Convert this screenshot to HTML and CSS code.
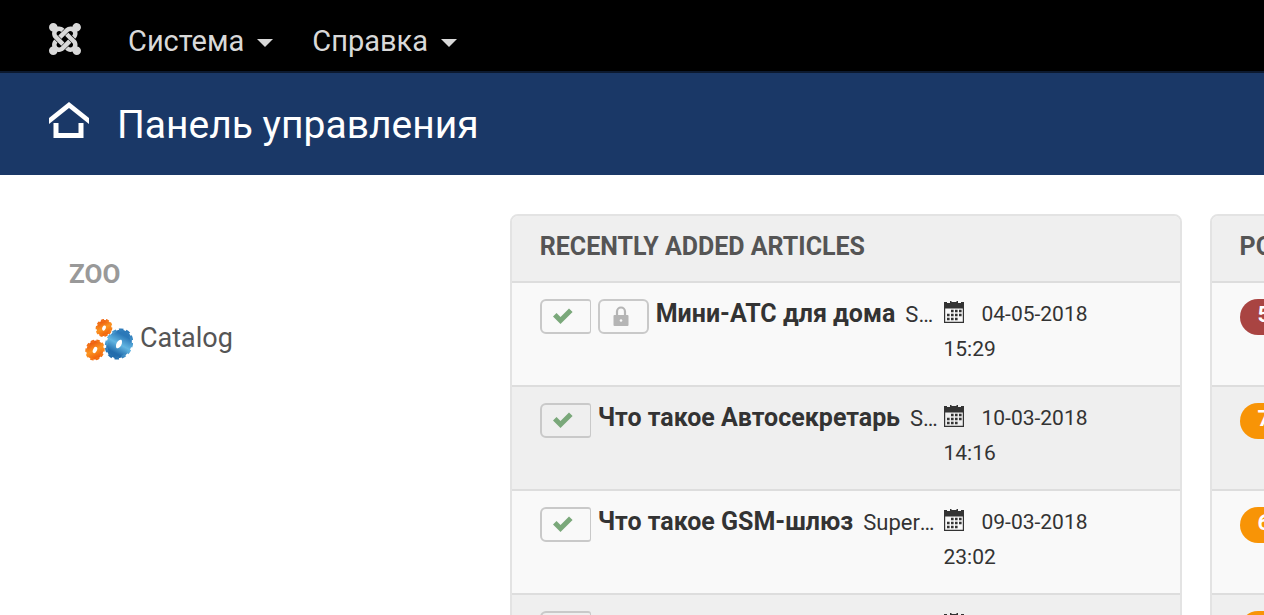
FILE: index.html
```html
<!DOCTYPE html>
<html lang="ru">
<head>
  <meta charset="UTF-8" />
  <meta name="viewport" content="width=device-width, initial-scale=1.0"/>
  <title>Панель управления</title>
  <link rel="stylesheet" href="styles.css">
</head>
<body>

<!-- shared icons -->
<svg class="sprite" aria-hidden="true">
  <symbol id="check" viewBox="0 0 20 16">
    <path d="M0 8.500 3.500 5 7.500 9 16 .4 19.600 4 7.500 16Z" fill="#7aa87a"/>
  </symbol>
  <symbol id="lock" viewBox="0 0 16 20">
    <path d="M4 10V5.500a4 4 0 0 1 8 0V10" fill="none" stroke="#b5b5b5" stroke-width="2.200"/>
    <rect x=".5" y="9" width="15" height="11" rx="1" fill="#b5b5b5"/>
    <circle cx="8" cy="14.500" r="1.300" fill="#f9f9f9"/>
  </symbol>
  <symbol id="calendar" viewBox="0 0 20 22">
    <path d="M0 1h3v1h3V0h1l1 1h4l1-1h1v2h3V1h3v21H0ZM1.200 7.500v13.300h17.600V7.500Z" fill="#333" fill-rule="evenodd"/>
    <path d="M7 10h11M3 14h15M3 18h11" stroke="#333" stroke-width="2.600" stroke-dasharray="2.600 1.400" fill="none"/>
  </symbol>
</svg>

<nav class="navbar">
  <a class="logo" href="#" aria-label="Joomla">
    <svg viewBox="0 32 448 448">
      <path d="M.6 92.1C.6 58.8 27.4 32 60.4 32c30 0 54.5 21.9 59.2 50.200 32.600-7.600 67.100.6 96.500 30l-44.300 44.300c-20.500-20.500-42.600-16.300-55.400-3.500-14.300 14.300-14.300 37.900 0 52.200l99.500 99.500-44 44.300c-87.700-87.200-49.700-49.700-99.800-99.700-26.800-26.500-35-64.800-24.800-98.900C20.400 144.600.6 120.700.6 92.100zm129.500 116.400l44.300 44.300c10-10 89.700-89.700 99.700-99.800 14.300-14.300 37.600-14.300 51.900 0 12.800 12.800 17 35-3.500 55.400l44 44.300c31.200-31.200 38.500-67.600 28.900-101.200 29.200-4.100 51.900-29.200 51.900-59.500 0-33.200-26.800-60.100-59.800-60.100-30.300 0-55.400 22.500-59.500 51.600-33.800-9.900-71.700-1.500-98.300 25.100-18.300 19.100-71.100 71.500-99.600 99.900zm266.300 152.200c8.200-32.700-.9-68.500-26.300-93.900-11.800-12.200 5 4.700-99.500-99.700l-44.300 44.300 99.700 99.700c14.300 14.300 14.300 37.600 0 51.900-12.800 12.800-35 17-55.400-3.500l-44 44.300c27.600 30.200 68 38.800 102.700 28 5.500 27.400 29.700 48.100 58.900 48.100 33 0 59.800-26.800 59.800-60.100 0-30.200-22.500-55-51.600-59.100zm-84.300-53.100l-44-44.300c-87 86.400-50.400 50.400-99.700 99.800-14.300 14.300-37.600 14.300-51.900 0-13.100-13.400-16.900-35.300 3.200-55.400l-44-44.300c-30.200 30.200-38 65.200-29.500 98.300-26.700 6-46.200 29.900-46.200 58.200C0 453.200 26.800 480 59.800 480c28.600 0 52.500-19.800 58.600-46.700 32.700 8.200 68.500-.6 94.200-26 32.100-32 12.200-12.400 99.500-99.700z"/>
    </svg>
  </a>
  <a class="menu" href="#">Система <span class="caret"></span></a>
  <a class="menu" href="#">Справка <span class="caret"></span></a>
</nav>

<header class="header">
  <svg class="home" viewBox="0 0 40 36" fill="#fff">
    <path d="M20 0 40 16v6L20 6 0 22v-6Z"/>
    <path d="M4.500 21h5v10h20V21h5v15h-30Z"/>
  </svg>
  <h1>Панель управления</h1>
</header>

<main class="content">
  <div class="columns">
    <aside class="sidebar">
      <h2>ZOO</h2>
      <a href="#">
        <svg class="gears" viewBox="0 0 48 42">
          <defs>
            <linearGradient id="orange" x1="0" y1="0" x2="1" y2="1">
              <stop offset="0" stop-color="#ec5a10"/>
              <stop offset=".5" stop-color="#fb9420"/>
              <stop offset="1" stop-color="#f0600c"/>
            </linearGradient>
            <linearGradient id="blue" x1="0" y1="0" x2="0" y2="1">
              <stop offset="0" stop-color="#2b78b8"/>
              <stop offset=".5" stop-color="#62b6e2"/>
              <stop offset="1" stop-color="#226cac"/>
            </linearGradient>
          </defs>
          <g fill="none" stroke="url(#orange)">
            <g transform="rotate(25 19 9)">
              <ellipse cx="19" cy="9" rx="4.500" ry="5.500" stroke-width="5.500"/>
              <ellipse cx="19" cy="9" rx="7" ry="8" stroke-width="2.400" stroke-dasharray="3 1.800"/>
            </g>
            <g transform="rotate(25 10 31)">
              <ellipse cx="10" cy="31" rx="5.200" ry="6.500" stroke-width="6.500"/>
              <ellipse cx="10" cy="31" rx="8.300" ry="9.600" stroke-width="2.400" stroke-dasharray="3.400 2.200"/>
            </g>
          </g>
          <g fill="none" stroke="url(#blue)" transform="rotate(28 34 25)">
            <ellipse cx="34" cy="25" rx="7.500" ry="9.700" stroke-width="10"/>
            <ellipse cx="34" cy="25" rx="12.200" ry="14.700" stroke-width="2.800" stroke-dasharray="4.300 2.700"/>
          </g>
        </svg>
        <span>Catalog</span>
      </a>
    </aside>

    <section class="panel">
      <h2>Recently Added Articles</h2>
      <div class="row">
        <div class="article">
          <button class="status" aria-label="Опубликовано"><svg><use href="#check"/></svg></button>
          <button class="locked" aria-label="Заблокировано"><svg><use href="#lock"/></svg></button>
          <a href="#">Мини-АТС для дома</a>
          <small>SuperUser</small>
        </div>
        <div class="date"><svg><use href="#calendar"/></svg>04-05-2018 15:29</div>
      </div>
      <div class="row">
        <div class="article">
          <button class="status" aria-label="Опубликовано"><svg><use href="#check"/></svg></button>
          <a href="#">Что такое Автосекретарь</a>
          <small>SuperUser</small>
        </div>
        <div class="date"><svg><use href="#calendar"/></svg>10-03-2018 14:16</div>
      </div>
      <div class="row">
        <div class="article">
          <button class="status" aria-label="Опубликовано"><svg><use href="#check"/></svg></button>
          <a href="#">Что такое GSM-шлюз</a>
          <small>SuperUser</small>
        </div>
        <div class="date"><svg><use href="#calendar"/></svg>09-03-2018 23:02</div>
      </div>
      <div class="row">
        <div class="article">
          <button class="status" aria-label="Опубликовано"><svg><use href="#check"/></svg></button>
        </div>
        <div class="date"><svg><use href="#calendar"/></svg></div>
      </div>
    </section>

    <section class="panel">
      <h2>Popular Articles</h2>
      <div class="row"><span class="badge high">5</span></div>
      <div class="row"><span class="badge">7</span></div>
      <div class="row"><span class="badge">6</span></div>
      <div class="row"><span class="badge"></span></div>
    </section>
  </div>
</main>

</body>
</html>
```
FILE: styles.css
```css
* {
  box-sizing: border-box;
}
body {
  font-family: Roboto, sans-serif;
  background: #fff;
  color: #333;
  margin: 0;
  height: 100vh;
  overflow: hidden;
  display: flex;
  flex-direction: column;
}
a {
  color: inherit;
  text-decoration: none;
}
.sprite {
  display: none;
}

/* top bar */
.navbar {
  flex: none;
  background: #000;
  border-bottom: 2px solid #0c192e;
  height: 73px;
  padding: 10px 49px 0;
  display: flex;
  align-items: center;
  color: #d9d9d9;
  font-size: 29px;
}
.logo {
  margin-right: 47px;
}
.logo svg {
  display: block;
  width: 32px;
  height: 32px;
  fill: #d9d9d9;
  margin-bottom: 4px;
}
.menu {
  display: flex;
  align-items: center;
  margin-right: 39px;
}
.caret {
  border: 8px solid transparent;
  border-top-color: #d9d9d9;
  border-bottom: 0;
  margin: 4px 0 0 13px;
}

/* title bar */
.header {
  flex: none;
  background: #1a3867;
  height: 102px;
  padding: 2px 49px 0;
  display: flex;
  align-items: center;
}
.home {
  width: 40px;
  height: 36px;
  margin: 0 28px 10px 0;
}
.header h1 {
  margin: 0;
  color: #fff;
  font-size: 39px;
  font-weight: 400;
}

/* columns run past the right edge of the window */
.content {
  flex: 1;
  min-height: 0;
  overflow: hidden;
}
.columns {
  display: grid;
  grid-template-columns: 11fr 17fr 17fr;
  gap: 28px;
  width: 149%;
  padding: 39px 2px 40px 47px;
}
.sidebar {
  padding: 43px 22px;
  color: #555;
}
.sidebar h2 {
  margin: 0 0 27px;
  color: #999;
  font-size: 26px;
  line-height: 35px;
}
.sidebar a {
  display: flex;
  align-items: center;
  gap: 7px;
  padding-left: 16px;
  font-size: 27px;
}
.sidebar span {
  padding-bottom: 4px;
}
.gears {
  width: 48px;
  height: 42px;
}

/* panels */
.panel {
  background: #f9f9f9;
  border: 2px solid #e3e3e3;
  border-radius: 8px;
  overflow: hidden;
}
.panel h2 {
  margin: 0;
  padding: 13px 28px 17px;
  background: #efefef;
  color: #555;
  font-size: 25px;
  line-height: 35px;
  text-transform: uppercase;
}
.row {
  display: flex;
  height: 104px;
  padding: 13px 28px;
  border-top: 2px solid #ddd;
}
.row:nth-child(odd) {
  background: #efefef;
}
.article {
  display: flex;
  align-items: flex-start;
  width: 66%;
  flex: none;
  gap: 7px;
  overflow: hidden;
  line-height: 35px;
}
.article a {
  flex: none;
  font-size: 25px;
  font-weight: 700;
}
.article small {
  margin-left: 3px;
  font-size: 22px;
  line-height: 37px;
  overflow: hidden;
  text-overflow: ellipsis;
  white-space: nowrap;
}
.article button {
  flex: none;
  display: flex;
  align-items: center;
  justify-content: center;
  width: 51px;
  height: 35px;
  margin: 3px 0 0;
  padding: 0 5px 2px 0;
  background: none;
  border: 2px solid #c9c9c9;
  border-radius: 6px;
  cursor: pointer;
}
.article .status {
  border-right-width: 1px;
  border-radius: 6px 3px 3px 6px;
}
.status svg {
  width: 20px;
  height: 16px;
}
.locked svg {
  width: 16px;
  height: 20px;
}
.date {
  width: 150px;
  padding-top: 1px;
  font-size: 21px;
  line-height: 35px;
}
.date svg {
  width: 20px;
  height: 22px;
  margin-right: 18px;
  vertical-align: -2px;
}
.badge {
  min-width: 62px;
  height: 36px;
  margin-top: 3px;
  padding: 0 18px;
  background: #f89406;
  border-radius: 18px;
  color: #fff;
  font-size: 22px;
  font-weight: 700;
  line-height: 32px;
}
.badge.high {
  background: #a94442;
}
```
